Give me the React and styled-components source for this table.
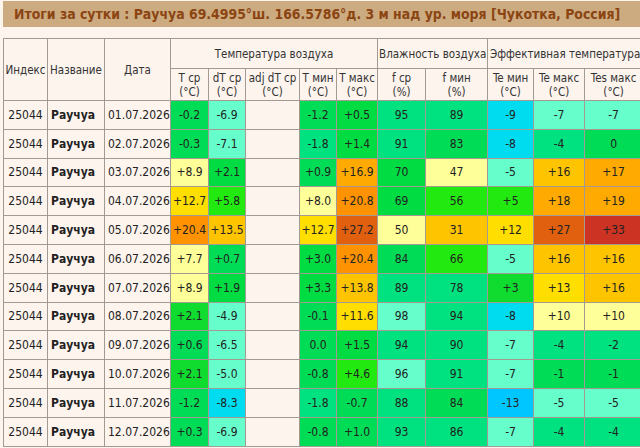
import React from "react";
import styled, { createGlobalStyle } from "styled-components";

const Global = createGlobalStyle`
  html, body {
    margin: 0;
    padding: 0;
    overflow: hidden;
    background: #fdf4ee;
  }
  body {
    font-family: "DejaVu Sans Condensed", "DejaVu Sans", sans-serif;
    font-stretch: condensed;
    color: #222;
  }
`;

const COLORS = {
  G: "#00dc55",
  G2: "#00dc42",
  G3: "#10dc30",
  M: "#00e17f",
  L: "#22ea10",
  AQ: "#66ffcc",
  C: "#00dcef",
  B: "#00c6ff",
  LY: "#ffff99",
  GO: "#ffde00",
  Y2: "#ffc400",
  O1: "#ffaa00",
  OR: "#ff9200",
  DO: "#e06010",
  R: "#cc3322",
};

const Page = styled.div`
  padding: 1px 0 0 3px;
  width: 700px;
`;

const TitleBar = styled.div`
  background: #cdab80;
  color: #8b4513;
  font-weight: bold;
  font-size: 13.9px;
  height: 26px;
  line-height: 26px;
  padding-left: 11px;
  white-space: nowrap;
  margin-bottom: 11px;
`;

const Table = styled.table`
  border-collapse: collapse;
  table-layout: fixed;
  width: 639px;
  font-size: 12px;
`;

const HeadCell = styled.th`
  border: 1px solid #a39b93;
  font-weight: normal;
  font-size: 11.5px;
  color: #333;
  text-align: center;
  vertical-align: middle;
  line-height: 14px;
  padding: 0 1px;
  white-space: nowrap;
  overflow: hidden;
`;

const HeadRow = styled.tr`
  height: ${(p) => p.$h}px;
`;

const Row = styled.tr`
  height: 28.8px;
`;

const Cell = styled.td`
  border: 1px solid #a39b93;
  background: ${(p) => (p.$bg ? COLORS[p.$bg] : "transparent")};
  text-align: ${(p) => p.$align || "center"};
  font-weight: ${(p) => (p.$bold ? "bold" : "normal")};
  padding: 0 ${(p) => (p.$align === "left" ? "3px" : "1px")};
  white-space: nowrap;
  overflow: hidden;
  vertical-align: middle;
`;

const widths = [44, 57, 66, 38, 37, 54, 37, 41, 48, 62, 46, 51, 58];

const rows = [
  ["01.07.2026", [["-0.2","G"],["-6.9","AQ"],["",""],["-1.2","G"],["+0.5","G2"],["95","M"],["89","M"],["-9","C"],["-7","AQ"],["-7","AQ"]]],
  ["02.07.2026", [["-0.3","G"],["-7.1","AQ"],["",""],["-1.8","M"],["+1.4","G2"],["91","M"],["83","G"],["-8","C"],["-4","M"],["0","G"]]],
  ["03.07.2026", [["+8.9","LY"],["+2.1","G2"],["",""],["+0.9","G"],["+16.9","O1"],["70","G2"],["47","LY"],["-5","AQ"],["+16","Y2"],["+17","O1"]]],
  ["04.07.2026", [["+12.7","GO"],["+5.8","L"],["",""],["+8.0","LY"],["+20.8","OR"],["69","G2"],["56","L"],["+5","L"],["+18","O1"],["+19","O1"]]],
  ["05.07.2026", [["+20.4","OR"],["+13.5","Y2"],["",""],["+12.7","GO"],["+27.2","DO"],["50","LY"],["31","Y2"],["+12","GO"],["+27","DO"],["+33","R"]]],
  ["06.07.2026", [["+7.7","LY"],["+0.7","G"],["",""],["+3.0","G2"],["+20.4","OR"],["84","G"],["66","L"],["-5","AQ"],["+16","Y2"],["+16","Y2"]]],
  ["07.07.2026", [["+8.9","LY"],["+1.9","G2"],["",""],["+3.3","G2"],["+13.8","Y2"],["89","M"],["78","M"],["+3","G3"],["+13","GO"],["+16","Y2"]]],
  ["08.07.2026", [["+2.1","G3"],["-4.9","AQ"],["",""],["-0.1","G"],["+11.6","GO"],["98","AQ"],["94","M"],["-8","C"],["+10","LY"],["+10","LY"]]],
  ["09.07.2026", [["+0.6","G"],["-6.5","AQ"],["",""],["0.0","G"],["+1.5","G2"],["94","M"],["90","M"],["-7","AQ"],["-4","M"],["-2","M"]]],
  ["10.07.2026", [["+2.1","G3"],["-5.0","AQ"],["",""],["-0.8","G"],["+4.6","L"],["96","AQ"],["91","M"],["-7","AQ"],["-1","G"],["-1","G"]]],
  ["11.07.2026", [["-1.2","G"],["-8.3","C"],["",""],["-1.8","M"],["-0.7","G"],["88","M"],["84","G"],["-13","B"],["-5","AQ"],["-5","AQ"]]],
  ["12.07.2026", [["+0.3","G"],["-6.9","AQ"],["",""],["-0.8","G"],["+1.0","G"],["93","M"],["86","M"],["-7","AQ"],["-4","M"],["-4","M"]]],
];

const sub = [
  ["T ср", "(°C)"],
  ["dT ср", "(°C)"],
  ["adj dT ср", "(°C)"],
  ["T мин", "(°C)"],
  ["T макс", "(°C)"],
  ["f ср", "(%)"],
  ["f мин", "(%)"],
  ["Te мин", "(°C)"],
  ["Te макс", "(°C)"],
  ["Tes макс", "(°C)"],
];

export default function App() {
  return (
    <>
      <Global />
      <Page>
        <TitleBar>
          Итоги за сутки : Раучуа 69.4995°ш. 166.5786°д. 3 м над ур. моря [Чукотка, Россия]
        </TitleBar>
        <Table>
          <colgroup>
            {widths.map((w, i) => (
              <col key={i} style={{ width: w }} />
            ))}
          </colgroup>
          <thead>
            <HeadRow $h={30}>
              <HeadCell rowSpan={2}>Индекс</HeadCell>
              <HeadCell rowSpan={2}>Название</HeadCell>
              <HeadCell rowSpan={2}>Дата</HeadCell>
              <HeadCell colSpan={5}>Температура воздуха</HeadCell>
              <HeadCell colSpan={2}>Влажность воздуха</HeadCell>
              <HeadCell colSpan={3}>Эффективная температура</HeadCell>
            </HeadRow>
            <HeadRow $h={32}>
              {sub.map(([a, b], i) => (
                <HeadCell key={i}>
                  {a}
                  <br />
                  {b}
                </HeadCell>
              ))}
            </HeadRow>
          </thead>
          <tbody>
            {rows.map(([date, cells]) => (
              <Row key={date}>
                <Cell>25044</Cell>
                <Cell $align="left" $bold>
                  Раучуа
                </Cell>
                <Cell $align="left">{date}</Cell>
                {cells.map(([v, c], i) => (
                  <Cell key={i} $bg={c}>
                    {v}
                  </Cell>
                ))}
              </Row>
            ))}
          </tbody>
        </Table>
      </Page>
    </>
  );
}
